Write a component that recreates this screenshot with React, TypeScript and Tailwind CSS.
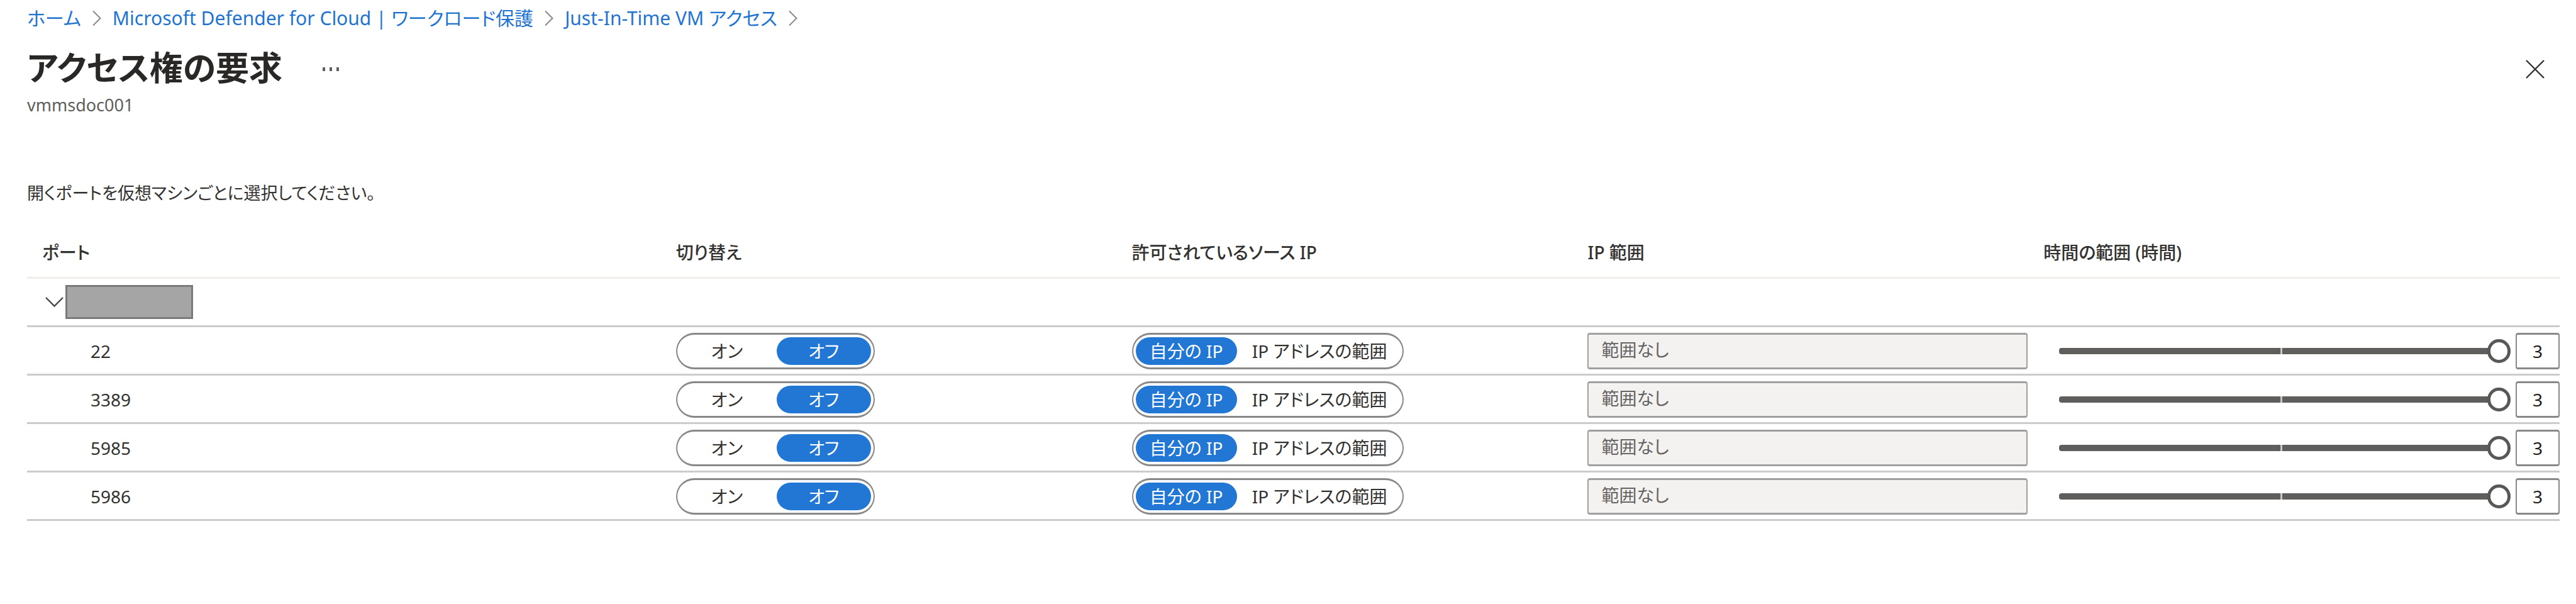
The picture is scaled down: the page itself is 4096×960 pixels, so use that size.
import { useState } from "react";

const BREADCRUMBS = [
  "ホーム",
  "Microsoft Defender for Cloud | ワークロード保護",
  "Just-In-Time VM アクセス",
];

const PORTS = ["22", "3389", "5985", "5986"];

function Separator() {
  return (
    <svg className="h-6 w-[14px] shrink-0" viewBox="0 0 14 24" fill="none" stroke="#8a8886" strokeWidth="2" aria-hidden="true">
      <path d="M1 0.5 L12.5 12 L1 23.5" />
    </svg>
  );
}

function Segments({
  label,
  options,
  initial,
  className,
  columns,
}: {
  label: string;
  options: string[];
  initial: number;
  className: string;
  columns: string;
}) {
  const [selected, setSelected] = useState(initial);
  return (
    <div
      role="group"
      aria-label={label}
      className={`grid h-[58px] gap-1 rounded-full border-x-2 border-y-[3px] border-[#8a8886] p-1 ${columns} ${className}`}
    >
      {options.map((option, i) => (
        <button
          key={option}
          type="button"
          aria-pressed={i === selected}
          onClick={() => setSelected(i)}
          className={`flex items-center justify-center rounded-full whitespace-nowrap ${
            i === selected ? "bg-[#2377d4] text-white" : "text-[#323130]"
          }`}
        >
          {option}
        </button>
      ))}
    </div>
  );
}

function PortRow({ port }: { port: string }) {
  const [hours, setHours] = useState("3");
  const cell = "h-[77px] border-b-[3px] border-[#cccccc] p-0 pt-0.5 pl-[25px]";
  return (
    <tr>
      <th scope="row" className="h-[77px] border-b-[3px] border-[#cccccc] p-0 pt-0.5 pl-[101px] text-left font-normal">
        {port}
      </th>
      <td className={cell}>
        <Segments label={`${port} 切り替え`} options={["オン", "オフ"]} initial={1} className="w-[316px]" columns="grid-cols-2" />
      </td>
      <td className={cell}>
        <Segments
          label={`${port} 許可されているソース IP`}
          options={["自分の IP", "IP アドレスの範囲"]}
          initial={0}
          className="w-[432px]"
          columns="grid-cols-[161px_1fr]"
        />
      </td>
      <td className={cell}>
        <input
          type="text"
          disabled
          aria-label={`${port} IP 範囲`}
          placeholder="範囲なし"
          className="block h-[58px] w-full rounded-[4px] border-x-2 border-y-[3px] border-[#a19f9d] bg-[#f3f2f1] px-5 pb-1 placeholder:text-[#666462]"
        />
      </td>
      <td className={cell}>
        <div className="flex items-center gap-2 pl-[25px]">
          <div className="relative flex flex-1 items-center">
            <input
              type="range"
              min="1"
              max="3"
              value={hours}
              onChange={(e) => setHours(e.target.value)}
              aria-label={`${port} 時間の範囲`}
              className="h-[38px] w-full appearance-none bg-transparent [&::-webkit-slider-runnable-track]:h-[10px] [&::-webkit-slider-runnable-track]:rounded-[4px] [&::-webkit-slider-runnable-track]:bg-[linear-gradient(to_right,#605e5c_98%,transparent_98%)] [&::-webkit-slider-thumb]:mt-[-14px] [&::-webkit-slider-thumb]:h-[38px] [&::-webkit-slider-thumb]:w-[37px] [&::-webkit-slider-thumb]:appearance-none [&::-webkit-slider-thumb]:rounded-full [&::-webkit-slider-thumb]:border-[5px] [&::-webkit-slider-thumb]:border-[#5a5856] [&::-webkit-slider-thumb]:bg-white"
            />
            <span className="pointer-events-none absolute left-[49%] h-[10px] w-[3px] bg-[#c8c6c4]" />
          </div>
          <input
            type="text"
            value={hours}
            onChange={(e) => setHours(e.target.value)}
            aria-label={`${port} 時間`}
            className="h-[58px] w-[70px] rounded-[4px] border-x-2 border-y-[3px] border-[#8a8886] bg-white text-center text-[#1b1a19]"
          />
        </div>
      </td>
    </tr>
  );
}

export default function App() {
  const [open, setOpen] = useState(true);
  const head = "h-[82px] border-b-[3px] border-[#f0edeb] p-0 pl-[25px] text-left font-medium";
  return (
    <div
      lang="ja"
      className="min-h-screen bg-white pr-[26px] pl-[43px] font-['Noto_Sans','Noto_Sans_CJK_JP',sans-serif] text-[28px] leading-9 text-[#323130] [font-feature-settings:'palt']"
    >
      <nav aria-label="階層" className="flex h-[58px] items-center gap-[18px] text-[30px] text-[#1f74d0]">
        {BREADCRUMBS.map((item) => (
          <span key={item} className="flex items-center gap-[18px]">
            <a href="#" className="whitespace-nowrap">
              {item}
            </a>
            <Separator />
          </span>
        ))}
      </nav>

      <header className="mt-2 flex items-center justify-between">
        <div className="flex h-[83px] items-center gap-16">
          <h1 className="text-[53px] leading-none font-semibold text-[#292827]">アクセス権の要求</h1>
          <button type="button" aria-label="その他" className="pt-1">
            <svg className="h-5 w-[26px]" viewBox="0 0 26 20" fill="#605e5c" aria-hidden="true">
              <rect x="0" y="7" width="4" height="6" />
              <rect x="11" y="7" width="4" height="6" />
              <rect x="22" y="7" width="4" height="6" />
            </svg>
          </button>
        </div>
        <button type="button" aria-label="閉じる" className="mr-6 pt-1">
          <svg className="h-[30px] w-[30px]" viewBox="0 0 30 30" fill="none" stroke="#323130" strokeWidth="2.4" aria-hidden="true">
            <path d="M1 1 L29 29 M29 1 L1 29" />
          </svg>
        </button>
      </header>
      <p className="text-[27px] text-[#605e5c]">vmmsdoc001</p>

      <main className="pt-[104px]">
        <p className="text-[27px]">開くポートを仮想マシンごとに選択してください。</p>
        <table className="mt-9 w-full table-fixed border-separate border-spacing-0">
          <thead>
            <tr>
              <th scope="col" className="h-[82px] w-[25%] border-b-[3px] border-[#f0edeb] p-0 pl-6 text-left font-medium">
                ポート
              </th>
              <th scope="col" className={`w-[18%] ${head}`}>切り替え</th>
              <th scope="col" className={`w-[18%] ${head}`}>許可されているソース IP</th>
              <th scope="col" className={`w-[18%] ${head}`}>IP 範囲</th>
              <th scope="col" className={head}>時間の範囲 (時間)</th>
            </tr>
          </thead>
          <tbody>
            <tr>
              <td colSpan={5} className="h-[77px] border-b-[3px] border-[#cccccc] p-0 pl-[29px]">
                <button
                  type="button"
                  aria-label="仮想マシン"
                  aria-expanded={open}
                  onClick={() => setOpen(!open)}
                  className="flex items-center gap-[3px]"
                >
                  <svg className="h-4 w-[29px]" viewBox="0 0 29 16" fill="none" stroke="#484644" strokeWidth="2.4" aria-hidden="true">
                    <path d="M1 1 L14.5 14.5 L28 1" />
                  </svg>
                  <span className="h-[54px] w-[203px] border-[3px] border-[#7a7a7a] bg-[#a5a5a5]" />
                </button>
              </td>
            </tr>
            {open && PORTS.map((port) => <PortRow key={port} port={port} />)}
          </tbody>
        </table>
      </main>
    </div>
  );
}
